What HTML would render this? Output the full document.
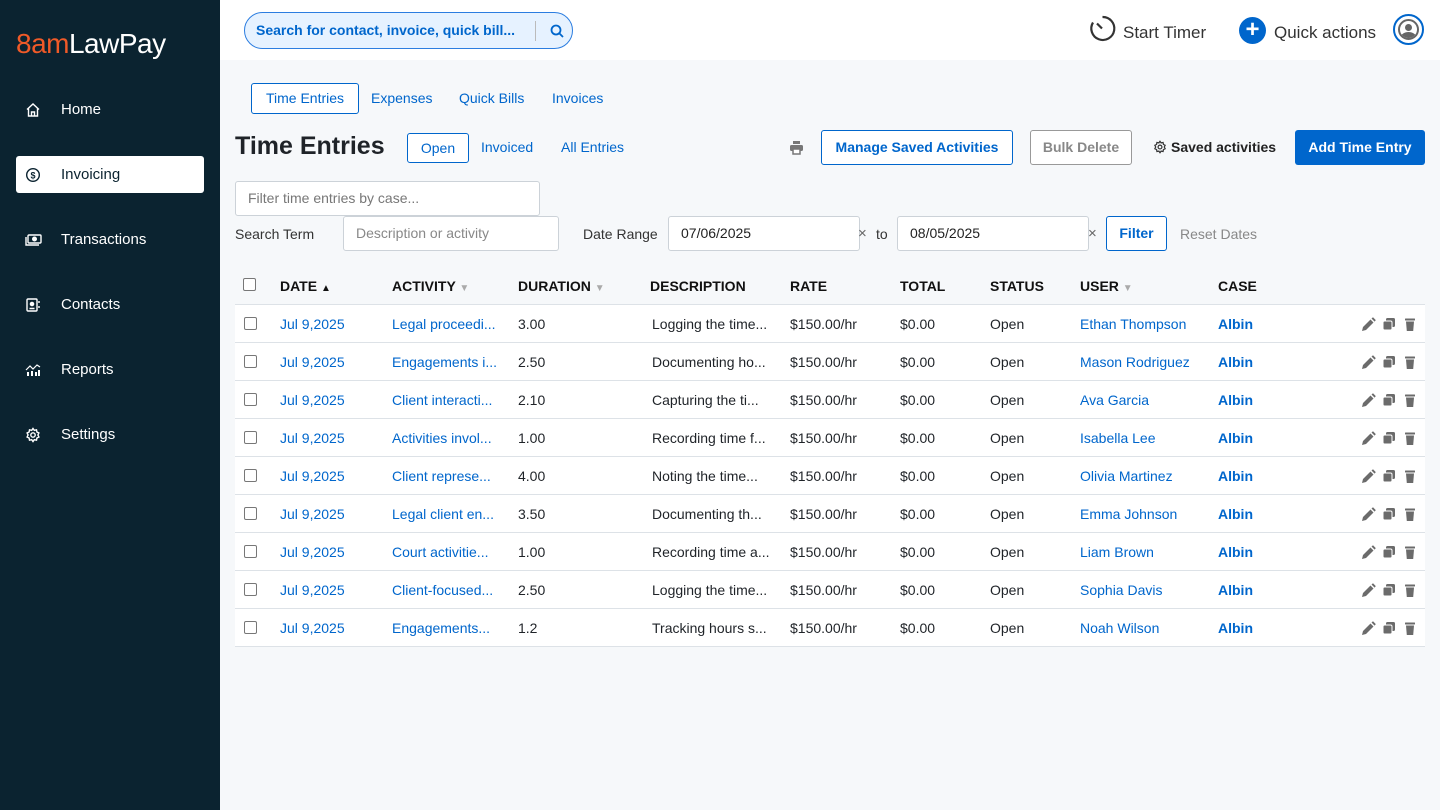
<!DOCTYPE html>
<html><head><style>
*{box-sizing:border-box;margin:0;padding:0}
body{width:1440px;height:810px;overflow:hidden;font-family:"Liberation Sans",Arial,sans-serif;background:#f6f8fa;position:relative;color:#1f2328}
.abs{position:absolute}
.side{position:absolute;left:0;top:0;width:220px;height:810px;background:#0b2330}
.nav{position:absolute;left:16px;width:188px;height:37px;color:#fff;font-size:15px;line-height:37px;padding-left:45px}
.nav svg{position:absolute;left:9px;top:11px}
.nav.act{background:#fff;color:#0b2330;border-radius:3px}
.top{position:absolute;left:220px;top:0;width:1220px;height:60px;background:#fff}
.blue{color:#0066cc}
.btn{position:absolute;border:1px solid #0066cc;border-radius:3px;font-size:14px;text-align:center;background:#fff}
.inp{position:absolute;border:1px solid #ccd2d8;border-radius:3px;background:#fff;font-size:14px;padding-left:12px;color:#222}
.th{position:absolute;top:278px;font-size:14px;font-weight:bold;color:#111}
.row{position:absolute;left:235px;width:1190px;height:38px;background:#fff;border-bottom:1px solid #dde2e7;font-size:14px}
.row span{position:absolute;top:11px;white-space:nowrap}
.cb{position:absolute;width:13px;height:13px;border:1px solid #777;border-radius:2px;background:#fff}
</style></head><body>
<div class="side">
<div class="abs" style="left:16px;top:28px;font-size:28px;letter-spacing:-0.5px"><span style="color:#f05a28">8am</span><span style="color:#fff">LawPay</span></div>
<div class="nav" style="top:91px"><svg width="16" height="16" viewBox="0 0 16 16" fill="none" stroke="#fff" stroke-width="1.4"><path d="M2 7.5L8 2l6 5.5M3.5 6.5V14h9V6.5M6.5 14v-4h3v4"/></svg>Home</div>
<div class="nav act" style="top:156px"><svg width="16" height="16" viewBox="0 0 16 16" fill="none" stroke="#0b2330" stroke-width="1.4"><circle cx="8" cy="8" r="6.3"/><text x="8" y="11.5" font-size="9" text-anchor="middle" fill="#0b2330" stroke="none" font-weight="bold">$</text></svg>Invoicing</div>
<div class="nav" style="top:221px"><svg width="18" height="16" viewBox="0 0 18 16" fill="none" stroke="#fff" stroke-width="1.4"><rect x="3" y="3" width="13" height="8" rx="1"/><circle cx="9.5" cy="7" r="1.8" fill="#fff"/><path d="M1 5v8h13"/></svg>Transactions</div>
<div class="nav" style="top:286px"><svg width="16" height="16" viewBox="0 0 16 16" fill="none" stroke="#fff" stroke-width="1.4"><rect x="2" y="2" width="10" height="12" rx="1"/><circle cx="7" cy="7" r="1.6" fill="#fff"/><path d="M4.5 11.5h5M14 4v2M14 9v2"/></svg>Contacts</div>
<div class="nav" style="top:351px"><svg width="16" height="16" viewBox="0 0 16 16" fill="#fff"><rect x="2" y="10" width="2" height="4"/><rect x="6" y="9" width="2" height="5"/><rect x="10" y="10" width="2" height="4"/><rect x="13" y="8" width="2" height="6"/><path d="M1 8l4-4 3 3 4-4 3 2" stroke="#fff" stroke-width="1.2" fill="none"/></svg>Reports</div>
<div class="nav" style="top:416px"><svg width="16" height="16" viewBox="0 0 16 16" fill="none" stroke="#fff" stroke-width="1.4"><circle cx="8" cy="8" r="2.2"/><path d="M8 1.5l1.3 1.8 2.2-.5.4 2.2 2 1-1 2 1 2-2 1-.4 2.2-2.2-.5L8 14.5l-1.3-1.8-2.2.5-.4-2.2-2-1 1-2-1-2 2-1 .4-2.2 2.2.5z"/></svg>Settings</div>
</div>
<div class="top">
<div class="abs" style="left:24px;top:12px;width:329px;height:37px;border:1px solid #2b7de0;border-radius:19px;background:#e6f2ff;font-size:14px;font-weight:bold;color:#0066cc;line-height:35px;padding-left:11px">Search for contact, invoice, quick bill...
<div class="abs" style="left:290px;top:8px;width:1px;height:20px;background:#bbb"></div>
<svg class="abs" style="left:305px;top:11px" width="14" height="14" viewBox="0 0 14 14" fill="none" stroke="#0066cc" stroke-width="1.8"><circle cx="6" cy="6" r="4.5"/><path d="M9.5 9.5L13 13"/></svg></div>
<svg class="abs" style="left:868px;top:14px" width="29" height="29" viewBox="0 0 29 29" fill="none" stroke="#333" stroke-width="2.2"><path d="M14.5 3A11.5 11.5 0 1 1 5 8.5"/><path d="M9 9.5l5 5"/></svg>
<div class="abs" style="left:903px;top:23px;font-size:17px;color:#333">Start Timer</div>
<div class="abs" style="left:1019px;top:17px;width:27px;height:27px;border-radius:50%;background:#0066cc;color:#fff;font-size:24px;line-height:26px;text-align:center;font-weight:bold">+</div>
<div class="abs" style="left:1054px;top:23px;font-size:17px;color:#333">Quick actions</div>
<div class="abs" style="left:1173px;top:14px;width:31px;height:31px;border-radius:50%;border:2px solid #0066cc;background:#fff"><div class="abs" style="left:3px;top:3px;width:21px;height:21px;border-radius:50%;border:2px solid #666;overflow:hidden"><div class="abs" style="left:5px;top:3px;width:7px;height:7px;border-radius:50%;background:#666"></div><div class="abs" style="left:1px;top:11px;width:15px;height:10px;border-radius:50% 50% 0 0;background:#666"></div></div></div>
</div>
<div class="btn blue" style="left:251px;top:83px;width:108px;height:31px;line-height:29px">Time Entries</div>
<div class="abs blue" style="left:371px;top:90px;font-size:14px">Expenses</div>
<div class="abs blue" style="left:459px;top:90px;font-size:14px">Quick Bills</div>
<div class="abs blue" style="left:552px;top:90px;font-size:14px">Invoices</div>
<div class="abs" style="left:235px;top:132px;font-size:25px;font-weight:bold;color:#1f2328">Time Entries</div>
<div class="btn blue" style="left:407px;top:133px;width:62px;height:30px;line-height:28px">Open</div>
<div class="abs blue" style="left:481px;top:139px;font-size:14px">Invoiced</div>
<div class="abs blue" style="left:561px;top:139px;font-size:14px">All Entries</div>
<svg class="abs" style="left:789px;top:140px" width="15" height="15" viewBox="0 0 15 15" fill="#777"><rect x="4" y="1" width="7" height="3"/><rect x="1" y="5" width="13" height="6" rx="1.5"/><rect x="4" y="9" width="7" height="5" fill="#fff" stroke="#777" stroke-width="1.5"/></svg>
<div class="btn blue" style="left:821px;top:130px;width:192px;height:35px;line-height:33px;font-weight:bold">Manage Saved Activities</div>
<div class="btn" style="left:1030px;top:130px;width:102px;height:35px;line-height:33px;font-weight:bold;color:#888;border-color:#999">Bulk Delete</div>
<svg class="abs" style="left:1153px;top:140px" width="14" height="14" viewBox="0 0 16 16" fill="none" stroke="#333" stroke-width="1.4"><circle cx="8" cy="8" r="2.2"/><path d="M8 1.5l1.3 1.8 2.2-.5.4 2.2 2 1-1 2 1 2-2 1-.4 2.2-2.2-.5L8 14.5l-1.3-1.8-2.2.5-.4-2.2-2-1 1-2-1-2 2-1 .4-2.2 2.2.5z"/></svg>
<div class="abs" style="left:1171px;top:139px;font-size:14px;font-weight:bold;color:#222">Saved activities</div>
<div class="abs" style="left:1295px;top:130px;width:130px;height:35px;background:#0066cc;border-radius:3px;color:#fff;font-weight:bold;font-size:14px;text-align:center;line-height:35px">Add Time Entry</div>
<div class="inp" style="left:235px;top:181px;width:305px;height:35px;line-height:33px;color:#777">Filter time entries by case...</div>
<div class="abs" style="left:235px;top:226px;font-size:14px;color:#333">Search Term</div>
<div class="inp" style="left:343px;top:216px;width:216px;height:35px;line-height:33px;color:#888">Description or activity</div>
<div class="abs" style="left:583px;top:226px;font-size:14px;color:#333">Date Range</div>
<div class="inp" style="left:668px;top:216px;width:192px;height:35px;line-height:33px">07/06/2025</div>
<div class="abs" style="left:858px;top:225px;font-size:15px;color:#666">×</div>
<div class="abs" style="left:876px;top:226px;font-size:14px;color:#333">to</div>
<div class="inp" style="left:897px;top:216px;width:192px;height:35px;line-height:33px">08/05/2025</div>
<div class="abs" style="left:1088px;top:225px;font-size:15px;color:#666">×</div>
<div class="btn blue" style="left:1106px;top:216px;width:61px;height:35px;line-height:33px;font-weight:bold">Filter</div>
<div class="abs" style="left:1180px;top:226px;font-size:14px;color:#888">Reset Dates</div>
<div class="cb" style="left:243px;top:278px"></div>
<div class="th" style="left:280px">DATE <span style="font-size:10px">▲</span></div>
<div class="th" style="left:392px">ACTIVITY <span style="font-size:10px;color:#aaa">▼</span></div>
<div class="th" style="left:518px">DURATION <span style="font-size:10px;color:#aaa">▼</span></div>
<div class="th" style="left:650px">DESCRIPTION</div>
<div class="th" style="left:790px">RATE</div>
<div class="th" style="left:900px">TOTAL</div>
<div class="th" style="left:990px">STATUS</div>
<div class="th" style="left:1080px">USER <span style="font-size:10px;color:#aaa">▼</span></div>
<div class="th" style="left:1218px">CASE</div>
<div class="abs" style="left:235px;top:304px;width:1190px;height:1px;background:#dde2e7"></div>
<div id="rows"></div>
<script>
var d=[["Legal proceedi...","3.00","Logging the time...","Ethan Thompson"],["Engagements i...","2.50","Documenting ho...","Mason Rodriguez"],["Client interacti...","2.10","Capturing the ti...","Ava Garcia"],["Activities invol...","1.00","Recording time f...","Isabella Lee"],["Client represe...","4.00","Noting the time...","Olivia Martinez"],["Legal client en...","3.50","Documenting th...","Emma Johnson"],["Court activitie...","1.00","Recording time a...","Liam Brown"],["Client-focused...","2.50","Logging the time...","Sophia Davis"],["Engagements...","1.2","Tracking hours s...","Noah Wilson"]];
var h="";
var ic='<svg style="position:absolute;left:1126px;top:12px" width="60" height="15" viewBox="0 0 60 15" fill="#6b6b6b"><path d="M1 14l1-4 7.5-7.5 3 3L5 13z M10.5 1.5l1.5-1.2 2.8 2.8-1.2 1.5z"/><rect x="25" y="1" width="9" height="9" rx="1.5"/><rect x="22" y="4" width="9" height="9" rx="1.5" stroke="#fff" stroke-width="1"/><rect x="44" y="1.5" width="10" height="2" rx=".5"/><path d="M45 4.5h8l-.8 9.5h-6.4z"/></svg>';
d.forEach(function(r,i){var t=305+i*38;h+='<div class="row" style="top:'+t+'px"><div class="cb" style="left:9px;top:12px"></div><span class="blue" style="left:45px">Jul 9,2025</span><span class="blue" style="left:157px">'+r[0]+'</span><span style="left:283px">'+r[1]+'</span><span style="left:417px">'+r[2]+'</span><span style="left:555px">$150.00/hr</span><span style="left:665px">$0.00</span><span style="left:755px">Open</span><span class="blue" style="left:845px">'+r[3]+'</span><span class="blue" style="left:983px;font-weight:bold">Albin</span>'+ic+'</div>';});
document.getElementById("rows").innerHTML=h;
</script>
</body></html>
